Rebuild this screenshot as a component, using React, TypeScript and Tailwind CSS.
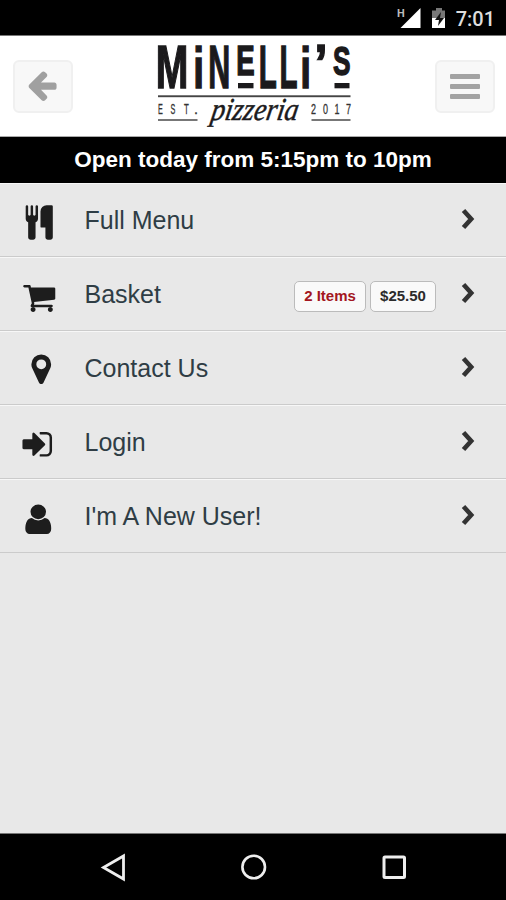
import type { ReactNode } from "react";

const icons = {
  cutlery:
    "M832 128v640q0 61-35.5 111t-92.5 70v779q0 52-38 90t-90 38h-128q-52 0-90-38t-38-90v-779q-57-20-92.5-70t-35.5-111v-640q0-26 19-45t45-19 45 19 19 45v416q0 26 19 45t45 19 45-19 19-45v-416q0-26 19-45t45-19 45 19 19 45v416q0 26 19 45t45 19 45-19 19-45v-416q0-26 19-45t45-19 45 19 19 45zm768 0v1600q0 52-38 90t-90 38h-128q-52 0-90-38t-38-90v-512h-224q-13 0-22.5-9.5t-9.5-22.5v-800q0-132 94-226t226-94h256q26 0 45 19t19 45z",
  cart: "M704 1536q0 52-38 90t-90 38-90-38-38-90 38-90 90-38 90 38 38 90zm896 0q0 52-38 90t-90 38-90-38-38-90 38-90 90-38 90 38 38 90zm128-1088v512q0 24-16.5 42.5t-40.5 21.5l-1044 122q13 60 13 70 0 16-24 64h920q26 0 45 19t19 45-19 45-45 19h-1024q-26 0-45-19t-19-45q0-11 8-31.5t16-36 21.5-40 15.5-29.5l-177-823h-204q-26 0-45-19t-19-45 19-45 45-19h256q16 0 28.5 6.5t19.5 15.5 13 24.5 8 26 5.5 29.5 4.5 26h1201q26 0 45 19t19 45z",
  marker:
    "M1152 640q0-106-75-181t-181-75-181 75-75 181 75 181 181 75 181-75 75-181zm256 0q0 109-33 179l-364 774q-16 33-47.5 52t-67.5 19-67.5-19-46.5-52l-365-774q-33-70-33-179 0-212 150-362t362-150 362 150 150 362z",
  signIn:
    "M1312 896q0 26-19 45l-544 544q-19 19-45 19t-45-19-19-45v-288h-448q-26 0-45-19t-19-45v-384q0-26 19-45t45-19h448v-288q0-26 19-45t45-19 45 19l544 544q19 19 19 45zm352-352v704q0 119-84.5 203.5t-203.5 84.5h-320q-13 0-22.5-9.5t-9.5-22.5q0-4-1-20t-.5-26.5 3-23.5 10-19.5 20.5-6.5h320q66 0 113-47t47-113v-704q0-66-47-113t-113-47h-312l-11.5-1-11.5-3-8-5.5-7-9-2-13.5q0-4-1-20t-.5-26.5 3-23.5 10-19.5 20.5-6.5h320q119 0 203.5 84.5t84.5 203.5z",
  user: "M1536 1399q0 109-62.5 187t-150.5 78h-854q-88 0-150.5-78t-62.5-187q0-85 8.5-160.5t31.5-152 58.5-131 94-89 134.5-34.5q131 128 313 128t313-128q76 0 134.5 34.5t94 89 58.5 131 31.5 152 8.5 160.5zm-256-887q0 159-112.5 271.5t-271.5 112.5-271.5-112.5-112.5-271.5 112.5-271.5 271.5-112.5 271.5 112.5 112.5 271.5z",
};

// x and width are the glyph's advance box, squeezed to a condensed face
const letters = [
  { char: "M", x: 155.8, y: 87.7, width: 32.6, size: 60.5 },
  { char: "i", x: 193.2, y: 87.7, width: 10.8, size: 58 },
  { char: "N", x: 208.3, y: 87.7, width: 22, size: 60.5 },
  { char: "E", x: 236.3, y: 75.2, width: 18.4, size: 42.5 },
  { char: "L", x: 258.8, y: 87.7, width: 18, size: 60.5 },
  { char: "L", x: 279.6, y: 87.7, width: 18, size: 60.5 },
  { char: "i", x: 300.2, y: 87.7, width: 10.8, size: 58 },
  { char: "’", x: 314.5, y: 81, width: 13, size: 52 },
  { char: "S", x: 333, y: 74.7, width: 17.5, size: 41.5 },
];

const smallLetters = [
  { char: "E", x: 158, width: 4.8 },
  { char: "S", x: 170.5, width: 4.8 },
  { char: "T", x: 184, width: 4.8 },
  { char: ".", x: 194, width: 4 },
  { char: "2", x: 311, width: 5 },
  { char: "0", x: 323, width: 5 },
  { char: "1", x: 334.5, width: 5 },
  { char: "7", x: 346, width: 5 },
];

function Logo() {
  return (
    <svg width="200" height="94" viewBox="154 39 200 94" fill="#1b1a1c" className="overflow-visible">
      {letters.map((l, i) => (
        <text
          key={i}
          x={l.x}
          y={l.y}
          fontSize={l.size}
          textLength={l.width}
          lengthAdjust="spacingAndGlyphs"
          stroke="#1b1a1c"
          strokeWidth="1.5"
          className="font-['Liberation_Sans',sans-serif] font-bold"
        >
          {l.char}
        </text>
      ))}
      <rect x="238" y="83" width="15.5" height="5.3" />
      <rect x="334.5" y="83" width="15" height="5.3" />
      <rect x="158" y="95.3" width="192.5" height="1.9" fill="#444" />
      {smallLetters.map((l, i) => (
        <text
          key={i}
          x={l.x}
          y="114"
          fontSize="14"
          textLength={l.width}
          lengthAdjust="spacingAndGlyphs"
          fill="#333"
          stroke="#333"
          strokeWidth="0.3"
          className="font-['Liberation_Sans',sans-serif]"
        >
          {l.char}
        </text>
      ))}
      <rect x="158" y="119" width="39.5" height="2" fill="#777" />
      <rect x="311.5" y="119" width="39" height="2" fill="#777" />
      <text
        x="0"
        y="0"
        fontSize="32"
        textLength="87"
        lengthAdjust="spacingAndGlyphs"
        transform="translate(210 119.5) skewX(-10)"
        stroke="#1b1a1c"
        strokeWidth="0.5"
        className="font-['Liberation_Serif',serif] italic"
      >
        pizzeria
      </text>
    </svg>
  );
}

function StatusBar() {
  return (
    <div className="flex h-9 items-center justify-end border-b border-[#777] bg-black pr-[11px] text-white">
      <svg width="50" height="24" viewBox="396 6 50 24">
        <text x="398" y="17" fontSize="11" fill="#bbb" className="font-[Roboto,sans-serif] font-bold">
          H
        </text>
        <path d="M421.500 8v20h-20z" fill="#fff" />
        <path d="M437 8h6v2.500h4v8h-14v-8h4z" fill="#777" />
        <path d="M433 18h14v10h-14z" fill="#fff" />
        <path d="M442 12l-6 8h4l-1 6 6-8h-4z" fill="#111" />
      </svg>
      <span className="ml-[11px] pt-0.5 font-[Roboto,sans-serif] text-[20px] leading-none font-medium text-[#ddd]">7:01</span>
    </div>
  );
}

function HeaderButton({ children }: { children: ReactNode }) {
  return (
    <button className="flex h-[53px] w-[60px] items-center justify-center rounded-md border-2 border-[#f0f0f0] bg-[#f8f8f8]">
      {children}
    </button>
  );
}

function Badge({ className, children }: { className: string; children: ReactNode }) {
  return (
    <span
      className={`flex h-[31px] items-center justify-center rounded-[5px] border border-[#bbb] bg-[#f9f9f9] text-[15px] font-bold ${className}`}
    >
      {children}
    </span>
  );
}

function MenuRow({
  icon,
  iconClass,
  label,
  children,
}: {
  icon: string;
  iconClass: string;
  label: string;
  children?: ReactNode;
}) {
  return (
    <li className="flex h-[74px] items-center border-t border-b border-t-[#f7f7f7] border-b-[#cbcbcb] pr-[30px] pl-[21px]">
      <span className="flex w-9 shrink-0 justify-center">
        <svg viewBox="0 0 1792 1920" className={`h-[37px] shrink-0 fill-[#1d1d1d] ${iconClass}`}>
          <path d={icon} />
        </svg>
      </span>
      <span className="ml-[27.500px] flex-1 text-[25px] leading-none text-[#2f3d45]">{label}</span>
      {children}
      <svg width="16" height="22" viewBox="0 0 16 22" className="mb-0.5 ml-[24px]">
        <path d="M3.500 2.500l7.700 8.500-7.700 8.500" fill="none" stroke="#333" strokeWidth="4.600" />
      </svg>
    </li>
  );
}

export default function App() {
  return (
    <div className="flex h-[900px] w-[506px] flex-col overflow-hidden bg-[#e8e8e8] font-['Liberation_Sans',Arial,sans-serif]">
      <StatusBar />

      <header className="flex h-[101px] items-center justify-between border-b border-[#aaa] bg-white pr-[11px] pl-[13px]">
        <HeaderButton>
          <svg width="34" height="34" viewBox="0 0 1792 1792" fill="#a0a0a0" className="mr-0.5 mb-0.5">
            <path d="M1664 896v128q0 53-32.500 90.500t-84.500 37.500h-704l293 294q38 36 38 90t-38 90l-75 76q-37 37-90 37-52 0-91-37l-651-652q-37-37-37-90 0-52 37-91l651-650q38-38 91-38 52 0 90 38l75 74q38 38 38 91t-38 91l-293 293h704q52 0 84.500 37.500t32.500 90.500z" />
          </svg>
        </HeaderButton>
        <Logo />
        <HeaderButton>
          <span className="flex flex-col gap-[5px]">
            <span className="h-[5px] w-[30px] rounded-[1px] bg-[#a3a3a3]" />
            <span className="h-[5px] w-[30px] rounded-[1px] bg-[#a3a3a3]" />
            <span className="h-[5px] w-[30px] rounded-[1px] bg-[#a3a3a3]" />
          </span>
        </HeaderButton>
      </header>

      <div className="flex h-[46px] items-center justify-center bg-black text-[22.500px] leading-none font-bold text-white">
        Open today from 5:15pm to 10pm
      </div>

      <ul className="flex-1">
        <MenuRow icon={icons.cutlery} iconClass="mt-1 w-[34.500px]" label="Full Menu" />
        <MenuRow icon={icons.cart} iconClass="mt-2 w-[34.500px]" label="Basket">
          <span className="flex gap-1 pt-1">
            <Badge className="w-[72px] text-[#a31621]">2 Items</Badge>
            <Badge className="w-[66px] text-[#2b2b2b]">$25.50</Badge>
          </span>
        </MenuRow>
        <MenuRow icon={icons.marker} iconClass="mt-1 ml-1 w-[34.500px]" label="Contact Us" />
        <MenuRow icon={icons.signIn} iconClass="mt-1.5 mr-1 w-[34.500px]" label="Login" />
        <MenuRow icon={icons.user} iconClass="mt-2 mr-0.5 w-[34.500px] scale-x-105" label="I'm A New User!" />
      </ul>

      <nav className="flex h-[67px] items-center justify-between border-t border-[#777] bg-black pr-[97px] pl-[99px]">
        <svg width="30" height="30" viewBox="0 0 30 30" fill="none" stroke="#eee" strokeWidth="2.800">
          <path d="M24.500 4v23L4.500 15.500z" />
        </svg>
        <svg width="30" height="30" viewBox="0 0 30 30" fill="none" stroke="#eee" strokeWidth="2.600">
          <circle cx="14.700" cy="15" r="11.300" />
        </svg>
        <svg width="30" height="30" viewBox="0 0 30 30" fill="none" stroke="#eee" strokeWidth="3">
          <rect x="5" y="5" width="20.500" height="20.500" rx="1" />
        </svg>
      </nav>
    </div>
  );
}
